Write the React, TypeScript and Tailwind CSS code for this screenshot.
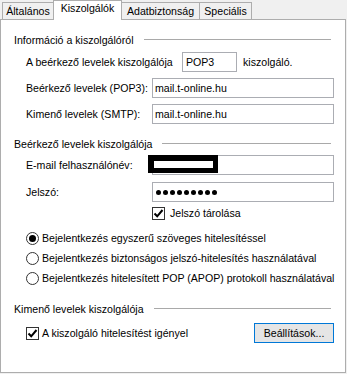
const FONT = "font-['Liberation_Sans','Arial',sans-serif]"

function Tab({ label, selected, className }: { label: string; selected?: boolean; className: string }) {
  return selected ? (
    <div className={`relative z-10 -ml-px h-[20px] flex justify-center items-start pt-[2px] bg-white border border-b-0 border-[#adadad] ${className}`}>
      {label}
    </div>
  ) : (
    <div className={`-ml-px mb-px h-[17px] flex justify-center items-center bg-[#f0f0f0] border border-b-0 border-[#adadad] ${className}`}>
      {label}
    </div>
  )
}

function GroupHeader({ title }: { title: string }) {
  return (
    <div className="h-[14px] flex items-center pr-[14px]">
      <span className="whitespace-nowrap">{title}</span>
      <div className="flex-1 h-px bg-[#a9a9a9] ml-[10px] -mt-[2px]" />
    </div>
  )
}

function Input({ value, children }: { value?: string; children?: React.ReactNode }) {
  return (
    <div className="relative w-[182px] h-[20px] border border-[#abadb3] bg-white flex items-center pl-[2px]">
      {value}
      {children}
    </div>
  )
}

function Check() {
  return (
    <div className="w-[13px] h-[13px] border border-[#333] bg-white flex items-center justify-center shrink-0">
      <svg width="11" height="11" viewBox="0 0 11 11">
        <path d="M1.5 5.5 L4.2 8.3 L9.5 2" fill="none" stroke="#000" strokeWidth="2" />
      </svg>
    </div>
  )
}

function Radio({ checked, label }: { checked?: boolean; label: string }) {
  return (
    <div className="h-[13px] flex items-center gap-[3px] pl-[12px]">
      <div className="w-[13px] h-[13px] rounded-full border border-[#333] bg-white flex items-center justify-center shrink-0">
        {checked && <div className="w-[7px] h-[7px] rounded-full bg-black" />}
      </div>
      <span className="whitespace-nowrap">{label}</span>
    </div>
  )
}

export default function App() {
  return (
    <div className={`w-[347px] h-[374px] bg-[#f0f0f0] text-black text-[10.6px] leading-none ${FONT}`}>
      {/* Tabs */}
      <div className="h-[20px] flex items-end pl-[3px]">
        <Tab label="Általános" className="w-[52px]" />
        <Tab label="Kiszolgálók" selected className="w-[69px]" />
        <Tab label="Adatbiztonság" className="w-[79px]" />
        <Tab label="Speciális" className="w-[53px]" />
      </div>

      {/* Panel */}
      <div className="-mt-px w-[346px] h-[354px] bg-white border border-[#adadad] pl-[13px] flex flex-col">
        <div className="mt-[13px]">
          <GroupHeader title="Információ a kiszolgálóról" />
        </div>

        <div className="mt-[5px] h-[20px] flex items-center pl-[12px]">
          <span className="w-[156px]">A beérkező levelek kiszolgálója</span>
          <div className="w-[55px] h-[20px] border border-[#abadb3] flex items-center pl-[3px]">POP3</div>
          <span className="ml-[6px]">kiszolgáló.</span>
        </div>

        <div className="mt-[6px] flex items-center pl-[12px]">
          <span className="w-[126px]">Beérkező levelek (POP3):</span>
          <Input value="mail.t-online.hu" />
        </div>
        <div className="mt-[6px] flex items-center pl-[12px]">
          <span className="w-[126px]">Kimenő levelek (SMTP):</span>
          <Input value="mail.t-online.hu" />
        </div>

        <div className="mt-[13px]">
          <GroupHeader title="Beérkező levelek kiszolgálója" />
        </div>

        <div className="mt-[4px] flex items-center pl-[12px]">
          <span className="w-[126px]">E-mail felhasználónév:</span>
          <Input>
            <div className="absolute left-[-5px] top-[-1px] w-[70px] h-[18px] bg-white border-[6px] border-r-[5px] border-b-[5px] border-black" />
          </Input>
        </div>
        <div className="mt-[7px] flex items-center pl-[12px]">
          <span className="w-[126px]">Jelszó:</span>
          <Input>
            <div className="flex gap-[2px] ml-[1px]">
              {Array.from({ length: 9 }).map((_, i) => (
                <div key={i} className="w-[5px] h-[5px] rounded-full bg-black" />
              ))}
            </div>
          </Input>
        </div>

        <div className="mt-[5px] h-[13px] flex items-center gap-[5px] pl-[138px]">
          <Check />
          <span>Jelszó tárolása</span>
        </div>

        <div className="mt-[12px]">
          <Radio checked label="Bejelentkezés egyszerű szöveges hitelesítéssel" />
        </div>
        <div className="mt-[7px]">
          <Radio label="Bejelentkezés biztonságos jelszó-hitelesítés használatával" />
        </div>
        <div className="mt-[7px]">
          <Radio label="Bejelentkezés hitelesített POP (APOP) protokoll használatával" />
        </div>

        <div className="mt-[17px]">
          <GroupHeader title="Kimenő levelek kiszolgálója" />
        </div>

        <div className="mt-[7px] h-[20px] flex items-center pl-[12px] pr-[11px]">
          <Check />
          <span className="ml-[3px]">A kiszolgáló hitelesítést igényel</span>
          <div className="flex-1" />
          <button className="w-[80px] h-[20px] border border-[#0078d7] bg-[#e5e5e5] flex items-center justify-center">
            Beállítások...
          </button>
        </div>
      </div>
    </div>
  )
}
